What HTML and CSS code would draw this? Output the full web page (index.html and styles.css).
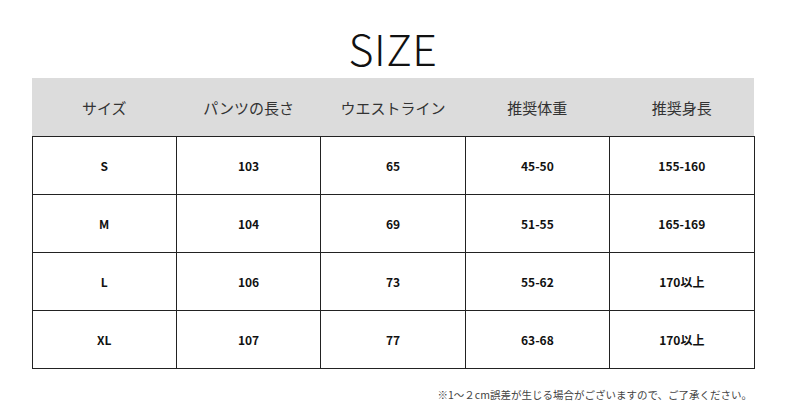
FILE: index.html
```html
<!DOCTYPE html>
<html lang="ja">
<head>
<meta charset="utf-8">
<link rel="stylesheet" href="styles.css">
</head>
<body>
<div class="page">
  <h1 class="title">SIZE</h1>
  <table class="size-table">
    <thead>
      <tr><th>サイズ</th><th>パンツの長さ</th><th>ウエストライン</th><th>推奨体重</th><th>推奨身長</th></tr>
    </thead>
    <tbody>
      <tr><td>S</td><td>103</td><td>65</td><td>45-50</td><td>155-160</td></tr>
      <tr><td>M</td><td>104</td><td>69</td><td>51-55</td><td>165-169</td></tr>
      <tr><td>L</td><td>106</td><td>73</td><td>55-62</td><td>170以上</td></tr>
      <tr><td>XL</td><td>107</td><td>77</td><td>63-68</td><td>170以上</td></tr>
    </tbody>
  </table>
  <p class="note">※1～２cm誤差が生じる場合がございますので、ご了承ください。</p>
</div>
</body>
</html>
```
FILE: styles.css
```css
html, body { margin: 0; padding: 0; background: #fff; }
body { font-family: "Noto Sans CJK JP", "Noto Sans", sans-serif; color: #222; }
.page { width: 786px; height: 411px; display: flex; flex-direction: column; align-items: center; }
.title {
  margin: 17px 0 0;
  height: 61px;
  font-size: 43px;
  font-weight: 300;
  line-height: 61px;
  color: #111;
  letter-spacing: 0.5px;
}
.size-table {
  border-collapse: collapse;
  width: 723px;
  table-layout: fixed;
}
.size-table th {
  background: #dcdcdc;
  height: 58px;
  padding: 0;
  font-size: 15px;
  font-weight: 400;
  color: #333;
  border: none;
}
.size-table td {
  height: 57px;
  padding: 0;
  border: 1px solid #222;
  text-align: center;
  font-size: 12px;
  font-weight: 700;
  color: #111;
}
.note {
  align-self: flex-end;
  margin: 18px 34px 0 0;
  font-size: 10.5px;
  color: #444;
}
```
